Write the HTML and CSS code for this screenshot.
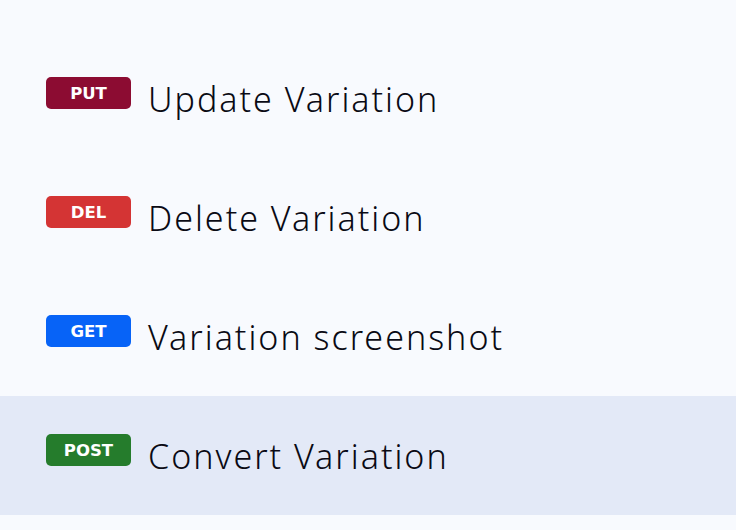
FILE: index.html
```html
<!DOCTYPE html>
<html>
<head>
<meta charset="utf-8">
<link rel="stylesheet" href="styles.css">
</head>
<body>
<ul class="list">
  <li class="row"><span class="badge put">PUT</span><span class="title">Update Variation</span></li>
  <li class="row"><span class="badge del">DEL</span><span class="title">Delete Variation</span></li>
  <li class="row"><span class="badge get">GET</span><span class="title">Variation screenshot</span></li>
  <li class="row active"><span class="badge post">POST</span><span class="title">Convert Variation</span></li>
</ul>
</body>
</html>
```
FILE: styles.css
```css
html, body {
  margin: 0;
  padding: 0;
  background: #f8fafe;
}
.list {
  list-style: none;
  margin: 0;
  padding: 39px 0 0 0;
}
.row {
  height: 119px;
  display: flex;
  align-items: center;
  padding-left: 46px;
  gap: 17px;
}
.row.active {
  background: #e3e9f7;
}
.badge {
  width: 85px;
  height: 32px;
  border-radius: 5px;
  display: flex;
  align-items: center;
  justify-content: center;
  color: #fff;
  font-family: "DejaVu Sans", sans-serif;
  font-weight: bold;
  font-size: 16.5px;
  margin-top: -11px;
}
.put { background: #8c0c32; }
.del { background: #d43434; }
.get { background: #0763f7; }
.post { background: #257c2c; }
.title {
  font-family: "Noto Sans", sans-serif;
  font-weight: 300;
  font-size: 34px;
  letter-spacing: 2px;
  color: #0a0a14;
}
```
